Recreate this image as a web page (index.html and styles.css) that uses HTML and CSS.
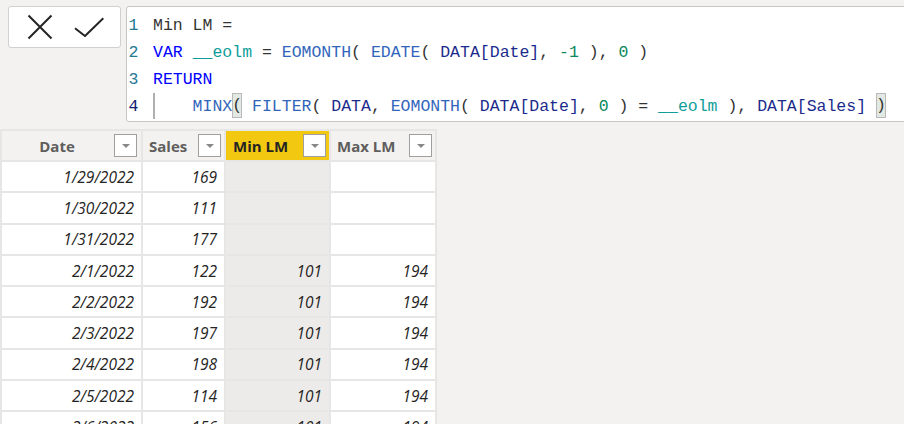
FILE: index.html
```html
<!DOCTYPE html>
<html lang="en">
<head>
<meta charset="utf-8">
<title>Min LM</title>
<link rel="stylesheet" href="styles.css">
</head>
<body>
<div class="formula-bar">
  <div class="actions">
    <svg class="icon-x" width="26" height="26" viewBox="0 0 26 26" aria-label="Cancel">
      <path d="M1.5 1.5 L24.5 24.5 M24.5 1.5 L1.5 24.5" stroke="#252423" stroke-width="2" fill="none"/>
    </svg>
    <svg class="icon-check" width="30" height="20" viewBox="0 0 30 20" aria-label="Commit">
      <path d="M1 11.3 L11 19 L29.3 1.3" stroke="#252423" stroke-width="2" fill="none"/>
    </svg>
  </div>
  <div class="editor">
    <div class="line"><span class="ln">1</span><span class="code"><span class="tx">Min LM =</span></span></div>
    <div class="line"><span class="ln">2</span><span class="code"><span class="kw">VAR</span> <span class="var">__eolm</span> <span class="tx">=</span> <span class="fn">EOMONTH</span><span class="tx">(</span> <span class="fn">EDATE</span><span class="tx">(</span> <span class="ref">DATA[Date]</span><span class="tx">,</span> <span class="num">-1</span> <span class="tx">),</span> <span class="num">0</span> <span class="tx">)</span></span></div>
    <div class="line"><span class="ln">3</span><span class="code"><span class="kw">RETURN</span></span></div>
    <div class="line"><span class="ln ln-active">4</span><span class="code"><span class="guide">    </span><span class="fn">MINX</span><span class="tx match">(</span> <span class="fn">FILTER</span><span class="tx">(</span> <span class="ref">DATA</span><span class="tx">,</span> <span class="fn">EOMONTH</span><span class="tx">(</span> <span class="ref">DATA[Date]</span><span class="tx">,</span> <span class="num">0</span> <span class="tx">) =</span> <span class="var">__eolm</span> <span class="tx">),</span> <span class="ref">DATA[Sales]</span> <span class="tx match">)</span></span></div>
  </div>
</div>

<div class="grid">
  <div class="hcell hcell-center"><span class="htext">Date</span><span class="dd"></span></div>
  <div class="hcell"><span class="htext">Sales</span><span class="dd"></span></div>
  <div class="hcell hcell-selected"><span class="htext">Min LM</span><span class="dd"></span></div>
  <div class="hcell"><span class="htext">Max LM</span><span class="dd"></span></div>

  <div class="cell">1/29/2022</div><div class="cell">169</div><div class="cell sel"></div><div class="cell"></div>
  <div class="cell">1/30/2022</div><div class="cell">111</div><div class="cell sel"></div><div class="cell"></div>
  <div class="cell">1/31/2022</div><div class="cell">177</div><div class="cell sel"></div><div class="cell"></div>
  <div class="cell">2/1/2022</div><div class="cell">122</div><div class="cell sel">101</div><div class="cell">194</div>
  <div class="cell">2/2/2022</div><div class="cell">192</div><div class="cell sel">101</div><div class="cell">194</div>
  <div class="cell">2/3/2022</div><div class="cell">197</div><div class="cell sel">101</div><div class="cell">194</div>
  <div class="cell">2/4/2022</div><div class="cell">198</div><div class="cell sel">101</div><div class="cell">194</div>
  <div class="cell">2/5/2022</div><div class="cell">114</div><div class="cell sel">101</div><div class="cell">194</div>
  <div class="cell">2/6/2022</div><div class="cell">156</div><div class="cell sel">101</div><div class="cell">194</div>
</div>
</body>
</html>
```

FILE: styles.css
```css
html, body {
  margin: 0;
  padding: 0;
  height: 100%;
  overflow: hidden;
  background: #f3f2f1;
  font-family: "Open Sans", "Noto Sans", sans-serif;
}

.formula-bar {
  display: flex;
  align-items: flex-start;
  gap: 5px;
  padding: 6px 0 0 8px;
  margin-right: -30px;
}

.actions {
  box-sizing: border-box;
  width: 113px;
  height: 42px;
  flex: none;
  background: #ffffff;
  border: 1px solid #d2d0ce;
  border-radius: 3px;
  display: flex;
  align-items: center;
  gap: 21px;
  padding-left: 18px;
}

.actions svg {
  display: block;
}

.editor {
  box-sizing: border-box;
  flex: 1;
  height: 116px;
  background: #ffffff;
  border: 1px solid #c8c6c4;
  border-radius: 3px;
  padding: 5px 0 0 1.5px;
  font-family: "Liberation Mono", "DejaVu Sans Mono", monospace;
  font-size: 16.5px;
  line-height: 27px;
}

.line {
  display: flex;
  height: 27px;
}

.ln {
  width: 24.5px;
  flex: none;
  color: #237893;
}

.ln-active {
  color: #0b216f;
}

.code {
  color: #333333;
  white-space: pre;
}

.tx { color: #333333; }
.kw { color: #0000ff; }
.var { color: #0f9d9a; }
.fn { color: #3165bb; }
.ref { color: #1a2b8c; }
.num { color: #09885a; }

.guide {
  display: inline-block;
  vertical-align: top;
  height: 26px;
  box-shadow: inset 2px 0 #b0b0b0;
}

.match {
  display: inline-block;
  vertical-align: top;
  height: 25px;
  line-height: 25px;
  background: #e2e9e2;
  box-shadow: inset 0 0 0 1px #b9b9b9;
}

.grid {
  display: grid;
  width: max-content;
  grid-template-columns: 139px 81px 103px 104px;
  grid-template-rows: 29px;
  grid-auto-rows: 29.3px;
  gap: 2px;
  padding: 2px;
  margin-top: 7px;
  background: #e6e6e6;
}

.hcell {
  display: flex;
  align-items: center;
  background: #f3f2f1;
  padding: 0 3px 0 6px;
  font-size: 15px;
  font-weight: 700;
  color: #605e5c;
}

.hcell-center {
  padding-right: 4px;
}

.hcell-center .htext {
  text-align: center;
  padding-right: 8px;
}

.hcell-selected {
  background: #f2c811;
  color: #252423;
  padding-left: 7px;
}

.htext {
  flex: 1;
  white-space: nowrap;
}

.dd {
  box-sizing: border-box;
  width: 23px;
  height: 23px;
  flex: none;
  background: #ffffff;
  border: 1px solid #a19f9d;
  display: flex;
  align-items: center;
  justify-content: center;
}

.dd::after {
  content: "";
  width: 0;
  height: 0;
  border-left: 4px solid transparent;
  border-right: 4px solid transparent;
  border-top: 4px solid #8a8886;
}

.cell {
  display: flex;
  align-items: center;
  justify-content: flex-end;
  padding-right: 7px;
  background: #ffffff;
  font-size: 15.5px;
  font-style: italic;
  color: #252423;
}

.cell.sel {
  background: #edebe9;
}
```
